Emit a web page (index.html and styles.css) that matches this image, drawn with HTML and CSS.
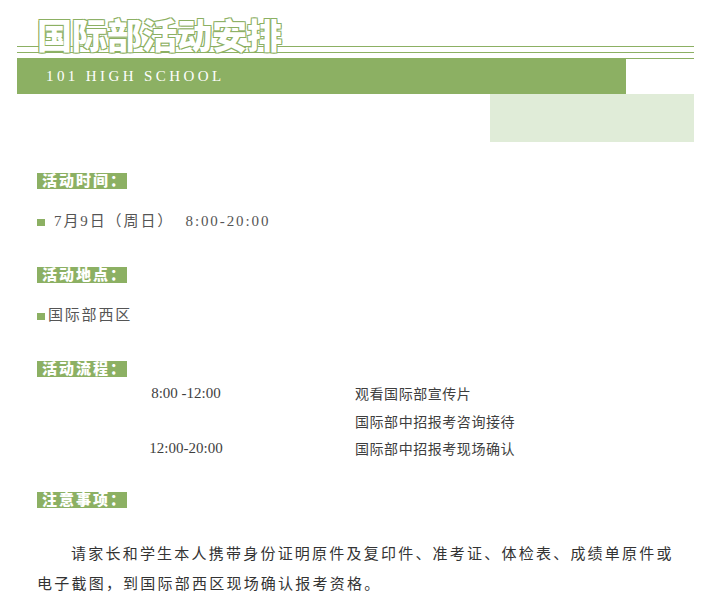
FILE: index.html
```html
<!DOCTYPE html>
<html lang="zh">
<head>
<meta charset="utf-8">
<title>国际部活动安排</title>
<link rel="stylesheet" href="styles.css">
</head>
<body>
<main class="page">
  <header class="masthead">
    <h1 class="title">国际部活动安排</h1>
    <div class="rules"></div>
    <div class="band"><span class="band-text">101 HIGH SCHOOL</span></div>
    <div class="tint"></div>
  </header>
  <section class="content">
    <h2 class="label">活动时间：</h2>
    <p class="line line-time"><span class="bullet"></span><span class="when">7月9日（周日）  8:00-20:00</span></p>
    <h2 class="label label-place">活动地点：</h2>
    <p class="line line-place"><span class="bullet"></span>国际部西区</p>
    <h2 class="label label-flow">活动流程：</h2>
    <div class="schedule">
      <span class="time">8:00 -12:00</span><span class="item">观看国际部宣传片</span>
      <span class="time"></span><span class="item">国际部中招报考咨询接待</span>
      <span class="time">12:00-20:00</span><span class="item">国际部中招报考现场确认</span>
    </div>
    <h2 class="label label-note">注意事项：</h2>
    <p class="note">请家长和学生本人携带身份证明原件及复印件、准考证、体检表、成绩单原件或电子截图，到国际部西区现场确认报考资格。</p>
  </section>
</main>
</body>
</html>
```
FILE: styles.css
```css
* { box-sizing: border-box; }
html, body { margin: 0; padding: 0; background: #fff; overflow: hidden; }
body { font-family: "Liberation Serif", "Noto Sans CJK SC", serif; color: #3e3e3e; }
.page { width: 703px; height: 606px; padding: 0 9px 0 17px; overflow: hidden; }
.masthead { position: relative; padding-top: 46px; }
.title {
  position: absolute; left: 20px; top: 16px; margin: 0;
  font: 900 35px/36px "Noto Sans CJK SC", sans-serif; color: #fff; white-space: nowrap;
  text-shadow: -1px -1px 0 #8cb063, 1px -1px 0 #8cb063, -1px 1px 0 #8cb063, 1px 1px 0 #8cb063;
}
.rules { height: 13px; border-top: 1px solid #8cb063; border-bottom: 1px solid #8cb063; background: linear-gradient(#8cb063, #8cb063) 0 5px / 100% 1px no-repeat; }
.band { width: 609px; height: 35px; background: #8cb063; padding-left: 29px; }
.band-text { font-size: 15px; line-height: 35px; letter-spacing: 3.4px; color: #fff; }
.tint { width: 204px; height: 48px; margin-left: auto; background: #e0ecd8; }
.content { padding-top: 31px; padding-left: 20px; }
.label {
  width: 90px; height: 16px; margin: 0; padding-left: 5px; background: #8cb063; color: #fff;
  font: 900 15px/14px "Noto Sans CJK SC", sans-serif; letter-spacing: 2px; white-space: nowrap;
}
.line { margin: 0; padding-bottom: 2px; display: flex; align-items: center; font-family: "Noto Sans CJK SC", sans-serif; }
.bullet { width: 8px; height: 7px; margin-top: 7px; background: #8cb063; flex: none; }
.line-time { margin-top: 19px; height: 24px; font-size: 15px; letter-spacing: 1.9px; color: #555; }
.when { margin-left: 9px; white-space: pre; font-family: "Liberation Serif", "Noto Sans CJK SC", serif; }
.label-place { margin-top: 35px; }
.line-place { margin-top: 19px; height: 24px; font-size: 15px; letter-spacing: 1.8px; color: #555; }
.line-place .bullet { margin-right: 3px; }
.label-flow { margin-top: 35px; }
.schedule { display: grid; grid-template-columns: 318px 1fr; grid-auto-rows: 27.5px; margin-top: 3px; font-size: 15px; line-height: 27.5px; }
.time { width: 298px; text-align: center; color: #3e3e3e; }
.item { font-family: "Noto Sans CJK SC", sans-serif; font-size: 14px; letter-spacing: .55px; }
.label-note { margin-top: 29px; }
.note { margin: 30px 0 0; width: 640px; font: 15px/30px "Noto Sans CJK SC", sans-serif; letter-spacing: 2.22px; text-indent: 34px; color: #333; }
```
